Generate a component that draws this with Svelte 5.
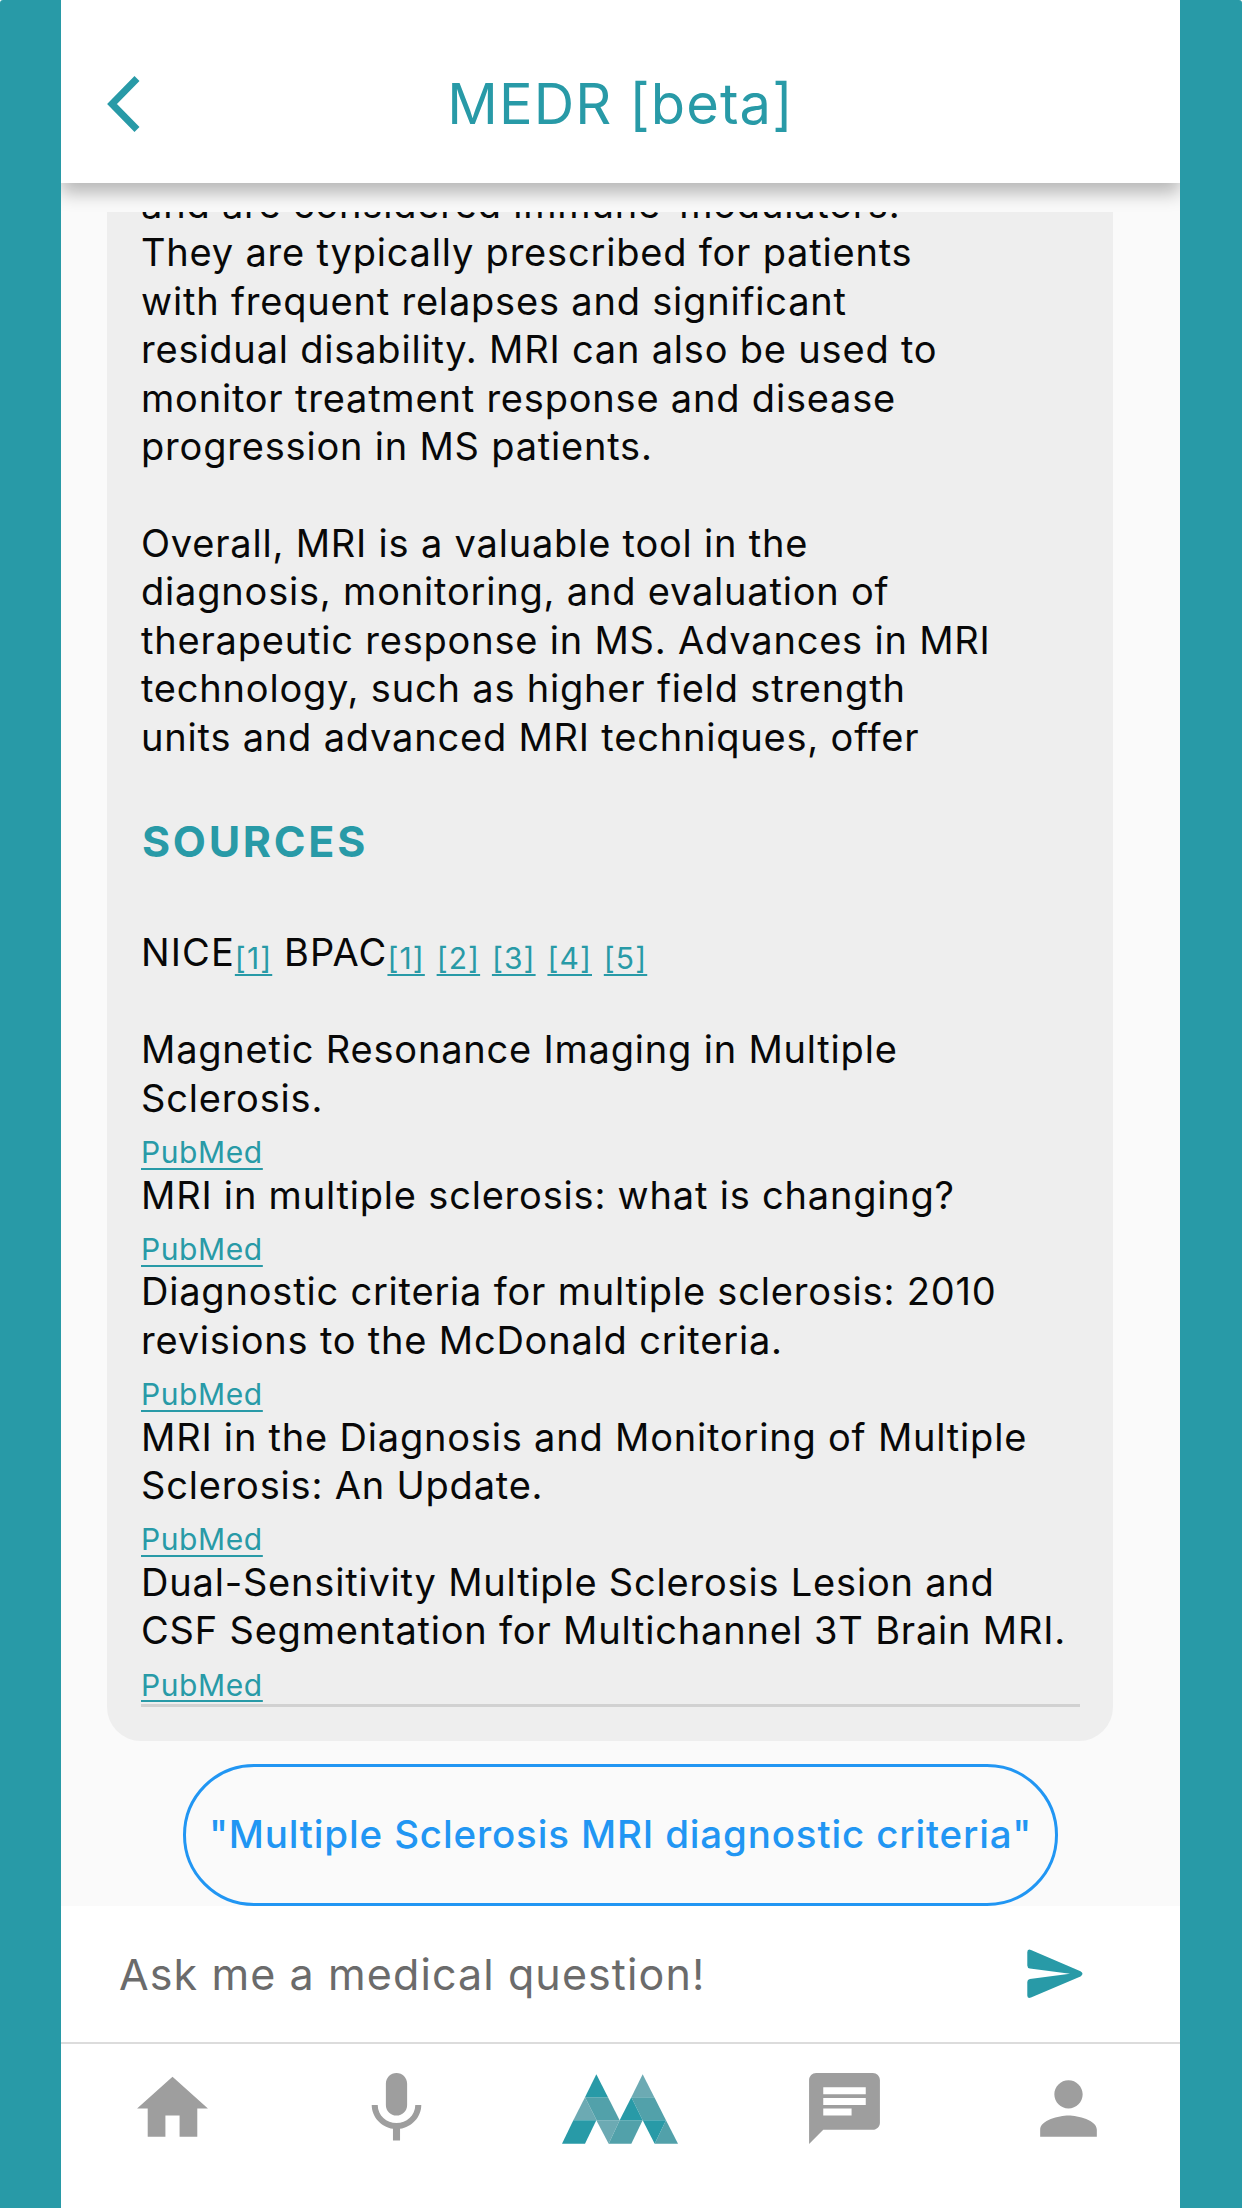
<script lang="ts">
	interface NavItem {
		label: string;
		path: string;
	}

	const answer = [
		'and are considered immune-modulators.',
		'They are typically prescribed for patients',
		'with frequent relapses and significant',
		'residual disability. MRI can also be used to',
		'monitor treatment response and disease',
		'progression in MS patients.',
		'',
		'Overall, MRI is a valuable tool in the',
		'diagnosis, monitoring, and evaluation of',
		'therapeutic response in MS. Advances in MRI',
		'technology, such as higher field strength',
		'units and advanced MRI techniques, offer'
	].join('\n');

	const papers = [
		'Magnetic Resonance Imaging in Multiple\nSclerosis.',
		'MRI in multiple sclerosis: what is changing?',
		'Diagnostic criteria for multiple sclerosis: 2010\nrevisions to the McDonald criteria.',
		'MRI in the Diagnosis and Monitoring of Multiple\nSclerosis: An Update.',
		'Dual-Sensitivity Multiple Sclerosis Lesion and\nCSF Segmentation for Multichannel 3T Brain MRI.'
	];

	const bpacRefs = [1, 2, 3, 4, 5];

	const navLeft: NavItem[] = [
		{ label: 'Home', path: 'M10 20v-6h4v6h5v-8h3L12 3 2 12h3v8z' },
		{
			label: 'Record',
			path: 'M12 14c1.66 0 3-1.34 3-3V5c0-1.66-1.34-3-3-3S9 3.34 9 5v6c0 1.66 1.34 3 3 3zm5.3-3c0 3-2.54 5.1-5.3 5.1S6.7 14 6.7 11H5c0 3.41 2.72 6.23 6 6.72V21h2v-3.28c3.28-.48 6-3.3 6-6.72z'
		}
	];
	const navRight: NavItem[] = [
		{
			label: 'Chat',
			path: 'M20 2H4c-1.1 0-2 .9-2 2v18l4-4h14c1.1 0 2-.9 2-2V4c0-1.1-.9-2-2-2zM6 9h12v2H6zm8 5H6v-2h8zm4-6H6V6h12z'
		},
		{
			label: 'Profile',
			path: 'M12 12c2.21 0 4-1.79 4-4s-1.79-4-4-4-4 1.79-4 4 1.79 4 4 4zm0 2c-2.67 0-8 1.34-8 4v2h16v-2c0-2.66-5.33-4-8-4z'
		}
	];
</script>

{#snippet navButton(item: NavItem)}
	<button class="nav-item" aria-label={item.label}>
		<svg width="85" height="85" viewBox="0 0 24 24"><path d={item.path} /></svg>
	</button>
{/snippet}

<div class="backdrop">
	<div class="phone">
		<header>
			<button class="back" aria-label="Back">
				<svg width="36" height="56" viewBox="0 0 36 56">
					<path d="M31 2.5 6 28l25 25.5" />
				</svg>
			</button>
			<h1>MEDR [beta]</h1>
		</header>

		<main>
			<article class="card">
				<p class="answer">{answer}</p>
				<h2>SOURCES</h2>
				<p class="refs">NICE<a href="#nice-1">[1]</a> BPAC{#each bpacRefs as n}<a href="#bpac-{n}">[{n}]</a>{' '}{/each}</p>
				<div class="papers">
					{#each papers as title}
						<p>{title}</p>
						<p><a href="#pubmed">PubMed</a></p>
					{/each}
				</div>
				<hr />
			</article>
			<button class="suggestion">"Multiple Sclerosis MRI diagnostic criteria"</button>
		</main>

		<div class="ask">
			<span class="placeholder">Ask me a medical question!</span>
			<button class="send" aria-label="Send">
				<svg width="56" height="50" viewBox="0 0 56 50">
					<path d="M.3 3.2Q.3-.5 4 1l49.5 21.2q4 2.6 0 5.2L4 48.4Q.3 50 .3 46.4V33q0-2.6 2.6-3L43 24.8 2.9 19.6Q.3 19.2.3 16.6z" />
				</svg>
			</button>
		</div>

		<nav>
			{#each navLeft as item}{@render navButton(item)}{/each}
			<button class="nav-item" aria-label="MEDR">
				<svg class="logo" width="116" height="70" viewBox="0 0 348 209">
					<g class="light">
						<path d="M69 69 104 138H34z" />
						<path d="M103 138h70l-33 71z" />
						<path d="M242 0l35 69h-69z" />
					</g>
					<g class="mid">
						<path d="M69 69h69l35 69h-69z" />
						<path d="M173 138h69l-34 71h-68z" />
						<path d="M208 69h69l35 69h-70z" />
						<path d="M312 138l36 71h-70z" />
					</g>
					<g class="dark">
						<path d="M103 0l35 69H69z" />
						<path d="M34 138h69l-34 71H0z" />
						<path d="M208 69l34 69h-69z" />
						<path d="M242 138h70l-34 71z" />
					</g>
				</svg>
			</button>
			{#each navRight as item}{@render navButton(item)}{/each}
		</nav>
	</div>
</div>

<style>
	:global(body) {
		background: #fff;
	}

	.backdrop {
		--teal: #289aa7;
		box-sizing: border-box;
		height: 2208px;
		padding: 0 62px 0 61px;
		background: var(--teal);
		border-radius: 3px 3px 0 0;
		font-family: Inter, 'Liberation Sans', sans-serif;
		overflow: hidden;
	}

	.phone {
		display: flex;
		flex-direction: column;
		height: 100%;
		background: #fff;
		overflow: hidden;
	}

	button {
		padding: 0;
		border: 0;
		background: none;
		font: inherit;
	}
	svg {
		display: block;
	}
	h1,
	h2,
	p {
		margin: 0;
	}

	/* Header */
	header {
		display: grid;
		grid-template-columns: 100px 1fr 100px;
		align-items: center;
		box-sizing: border-box;
		flex: none;
		height: 183px;
		padding-top: 24px;
		background: #fff;
		box-shadow: 0 10px 17px rgba(0, 0, 0, 0.27);
		z-index: 1;
	}
	.back {
		padding-left: 45px;
	}
	.back path {
		fill: none;
		stroke: var(--teal);
		stroke-width: 7;
	}
	h1 {
		color: var(--teal);
		font-size: 56px;
		font-weight: 440;
		letter-spacing: 1.1px;
		line-height: 68px;
		text-align: center;
		white-space: nowrap;
	}

	/* Conversation */
	main {
		display: flex;
		flex-direction: column;
		align-items: center;
		box-sizing: border-box;
		flex: none;
		height: 1723px;
		padding-top: 29px;
		background: #fafafa;
	}
	.card {
		display: flex;
		flex-direction: column;
		justify-content: flex-end;
		box-sizing: border-box;
		width: 1006px;
		height: 1529px;
		margin-right: 21px;
		padding: 0 33px 34px 34px;
		background: #eee;
		border-radius: 0 0 34px 34px;
		color: #080808;
		font-size: 38px;
		letter-spacing: 0.8px;
		line-height: 48.4px;
		overflow: hidden;
		z-index: 2;
	}
	.card p {
		flex: none;
		white-space: pre;
	}
	h2 {
		margin: 56.5px 0 62.5px 1px;
		color: var(--teal);
		font-size: 43px;
		font-weight: 680;
		letter-spacing: 2.7px;
		line-height: 48px;
	}
	a {
		color: var(--teal);
		font-size: 30px;
		letter-spacing: 0.6px;
		line-height: 1;
		text-decoration: underline;
		text-decoration-skip-ink: none;
		text-decoration-thickness: 2px;
		text-underline-offset: 5px;
		vertical-align: -2.6px;
	}
	.refs {
		margin-bottom: 49px;
		letter-spacing: 1.1px;
	}
	.refs a {
		letter-spacing: 1.1px;
	}
	hr {
		flex: none;
		width: 100%;
		height: 3px;
		margin: 1px 0 0;
		border: 0;
		background: #d1d1d1;
	}
	.suggestion {
		box-sizing: border-box;
		width: 875px;
		height: 142px;
		margin-top: 23px;
		padding-bottom: 2px;
		border: 3px solid #2196f3;
		border-radius: 71px;
		color: #2196f3;
		font-size: 38.5px;
		font-weight: 500;
		letter-spacing: 0.85px;
		white-space: nowrap;
	}

	/* Question input */
	.ask {
		display: flex;
		align-items: center;
		justify-content: space-between;
		flex: none;
		height: 136px;
		padding: 0 97px 0 58px;
	}
	.placeholder {
		color: #6b6b6b;
		font-size: 43px;
		letter-spacing: 1.1px;
	}
	.send path {
		fill: var(--teal);
	}

	/* Bottom navigation */
	nav {
		display: grid;
		grid-template-columns: repeat(5, 1fr);
		flex: 1;
		align-items: start;
		padding-top: 22px;
		border-top: 2px solid #dcdcdc;
	}
	.nav-item {
		display: flex;
		align-items: center;
		justify-content: center;
		height: 85px;
		fill: #9e9e9e;
	}
	.light {
		fill: #6caab3;
	}
	.mid {
		fill: #52a1aa;
	}
	.dark {
		fill: var(--teal);
	}
</style>
